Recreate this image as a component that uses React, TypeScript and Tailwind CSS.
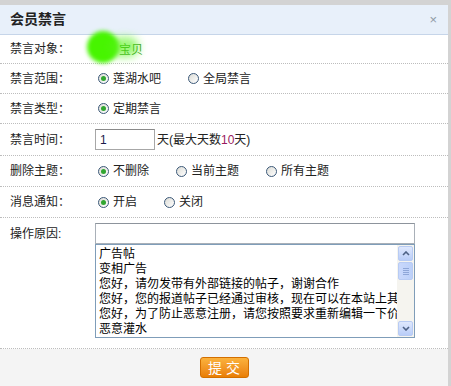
import { useState } from "react";

const font = { fontFamily: '"Liberation Sans", "Noto Sans CJK SC", sans-serif' };

const reasons = [
  "广告帖",
  "变相广告",
  "您好，请勿发带有外部链接的帖子，谢谢合作",
  "您好，您的报道帖子已经通过审核，现在可以在本站上其",
  "您好，为了防止恶意注册，请您按照要求重新编辑一下价",
  "恶意灌水",
];

function Radio({ checked, label, onClick }: { checked: boolean; label: string; onClick: () => void }) {
  return (
    <button onClick={onClick} className="mr-[27px] flex items-center gap-[4px] text-[12px] text-[#222]">
      <span className="grid h-[11px] w-[11px] place-items-center rounded-full border border-[#3b5878] bg-gradient-to-br from-[#dcdcd6] to-white">
        {checked && <span className="h-[5px] w-[5px] rounded-full bg-[#31a631]" />}
      </span>
      {label}
    </button>
  );
}

function Row({ label, h, children }: any) {
  return (
    <div className={`flex items-center border-b border-dotted border-[#bdbdbd] ${h}`}>
      <div className="w-[95px] shrink-0 pl-[10px] text-[12px] text-[#222]">{label}</div>
      <div className="flex items-center">{children}</div>
    </div>
  );
}

function ScrollBtn({ up }: { up?: boolean }) {
  return (
    <div className="grid h-[15px] w-[15px] place-items-center rounded-[2px] border border-[#b8cbf3] bg-gradient-to-b from-[#dfe8fd] to-[#b9cdf8]">
      <svg width="8" height="5" viewBox="0 0 8 5">
        <path d={up ? "M1 4 L4 1 L7 4" : "M1 1 L4 4 L7 1"} fill="none" stroke="#4d6185" strokeWidth="1.6" />
      </svg>
    </div>
  );
}

export default function App() {
  const [scope, setScope] = useState("lh");
  const [del, setDel] = useState("none");
  const [notify, setNotify] = useState("on");

  return (
    <div className="h-[386px] w-[451px] overflow-hidden bg-[#d3d3d3] pt-[5px] pr-[3px]" style={font}>
      <div className="flex h-[381px] flex-col bg-white">
        <div className="flex h-[30px] shrink-0 items-center justify-between border-b border-[#c6d5e9] bg-[#e8f0fa] pl-[10px] pr-[11px]">
          <span className="text-[14px] font-bold text-[#222]">会员禁言</span>
          <span className="text-[13px] leading-none text-[#8f9ba6]">×</span>
        </div>

        <Row label="禁言对象：" h="h-[29px]">
          <div className="relative">
            <span className="ml-[24px] text-[12px] text-[#3d9b1e]">宝贝</span>
            <span className="absolute left-[-8px] top-[-6px] h-[32px] w-[32px] rounded-full bg-[#47f500] blur-[2px]" />
            <span className="absolute left-[14px] top-[0px] h-[20px] w-[30px] rounded-full bg-[#58f21a] opacity-60 blur-[4px]" />
          </div>
        </Row>

        <Row label="禁言范围：" h="h-[30px]">
          <div className="ml-[3px] flex">
            <Radio checked={scope === "lh"} label="莲湖水吧" onClick={() => setScope("lh")} />
            <Radio checked={scope === "all"} label="全局禁言" onClick={() => setScope("all")} />
          </div>
        </Row>

        <Row label="禁言类型：" h="h-[30px]">
          <div className="ml-[3px] flex">
            <Radio checked label="定期禁言" onClick={() => {}} />
          </div>
        </Row>

        <Row label="禁言时间：" h="h-[32px]">
          <input
            defaultValue="1"
            className="h-[21px] w-[60px] border border-[#a7a7a7] border-t-[#8a8a8a] px-[4px] text-[12px] text-[#1a1a4a] outline-none"
          />
          <span className="ml-[2px] text-[12px] text-[#222]">
            天(最大天数<span className="text-[#99195e]">10</span>天)
          </span>
        </Row>

        <Row label="删除主题：" h="h-[31px]">
          <div className="ml-[3px] flex">
            <Radio checked={del === "none"} label="不删除" onClick={() => setDel("none")} />
            <Radio checked={del === "cur"} label="当前主题" onClick={() => setDel("cur")} />
            <Radio checked={del === "all"} label="所有主题" onClick={() => setDel("all")} />
          </div>
        </Row>

        <Row label="消息通知：" h="h-[31px]">
          <div className="ml-[3px] flex">
            <Radio checked={notify === "on"} label="开启" onClick={() => setNotify("on")} />
            <Radio checked={notify === "off"} label="关闭" onClick={() => setNotify("off")} />
          </div>
        </Row>

        <div className="flex h-[131px] shrink-0 items-start border-b border-dotted border-[#bdbdbd] pt-[5px]">
          <div className="w-[95px] shrink-0 pl-[10px] pt-[2px] text-[12px] text-[#222]">操作原因:</div>
          <div className="flex w-[320px] flex-col">
            <input className="h-[21px] w-full border border-[#a9b0b8] border-t-[#8d949c] outline-none" />
            <div className="flex h-[94px] border border-[#7f9db9] bg-white">
              <div className="flex-1 overflow-hidden pl-[3px] pt-[2px] text-[12px] leading-[15px] text-black">
                {reasons.map(r => (
                  <div key={r} className="whitespace-nowrap">{r}</div>
                ))}
              </div>
              <div className="flex w-[17px] flex-col items-center bg-[#f5f4ef] py-[1px]">
                <ScrollBtn up />
                <div className="mt-[1px] grid h-[18px] w-[15px] place-items-center rounded-[2px] border border-[#b8cbf3] bg-gradient-to-r from-[#c9d8fc] to-[#bcd0f9]">
                  <div className="flex flex-col gap-[1px]">
                    <span className="h-px w-[6px] bg-[#8ea6d8]" />
                    <span className="h-px w-[6px] bg-[#8ea6d8]" />
                    <span className="h-px w-[6px] bg-[#8ea6d8]" />
                    <span className="h-px w-[6px] bg-[#8ea6d8]" />
                  </div>
                </div>
                <div className="flex-1" />
                <ScrollBtn />
              </div>
            </div>
          </div>
        </div>

        <div className="flex flex-1 items-center justify-center bg-[#f4f4f4]">
          <button className="h-[21px] w-[49px] rounded-[3px] border border-[#d36f00] bg-gradient-to-b from-[#fbb23c] to-[#e97e02] text-[14px] leading-none tracking-[4px] text-white">
            <span className="pl-[4px]">提交</span>
          </button>
        </div>
      </div>
    </div>
  );
}
